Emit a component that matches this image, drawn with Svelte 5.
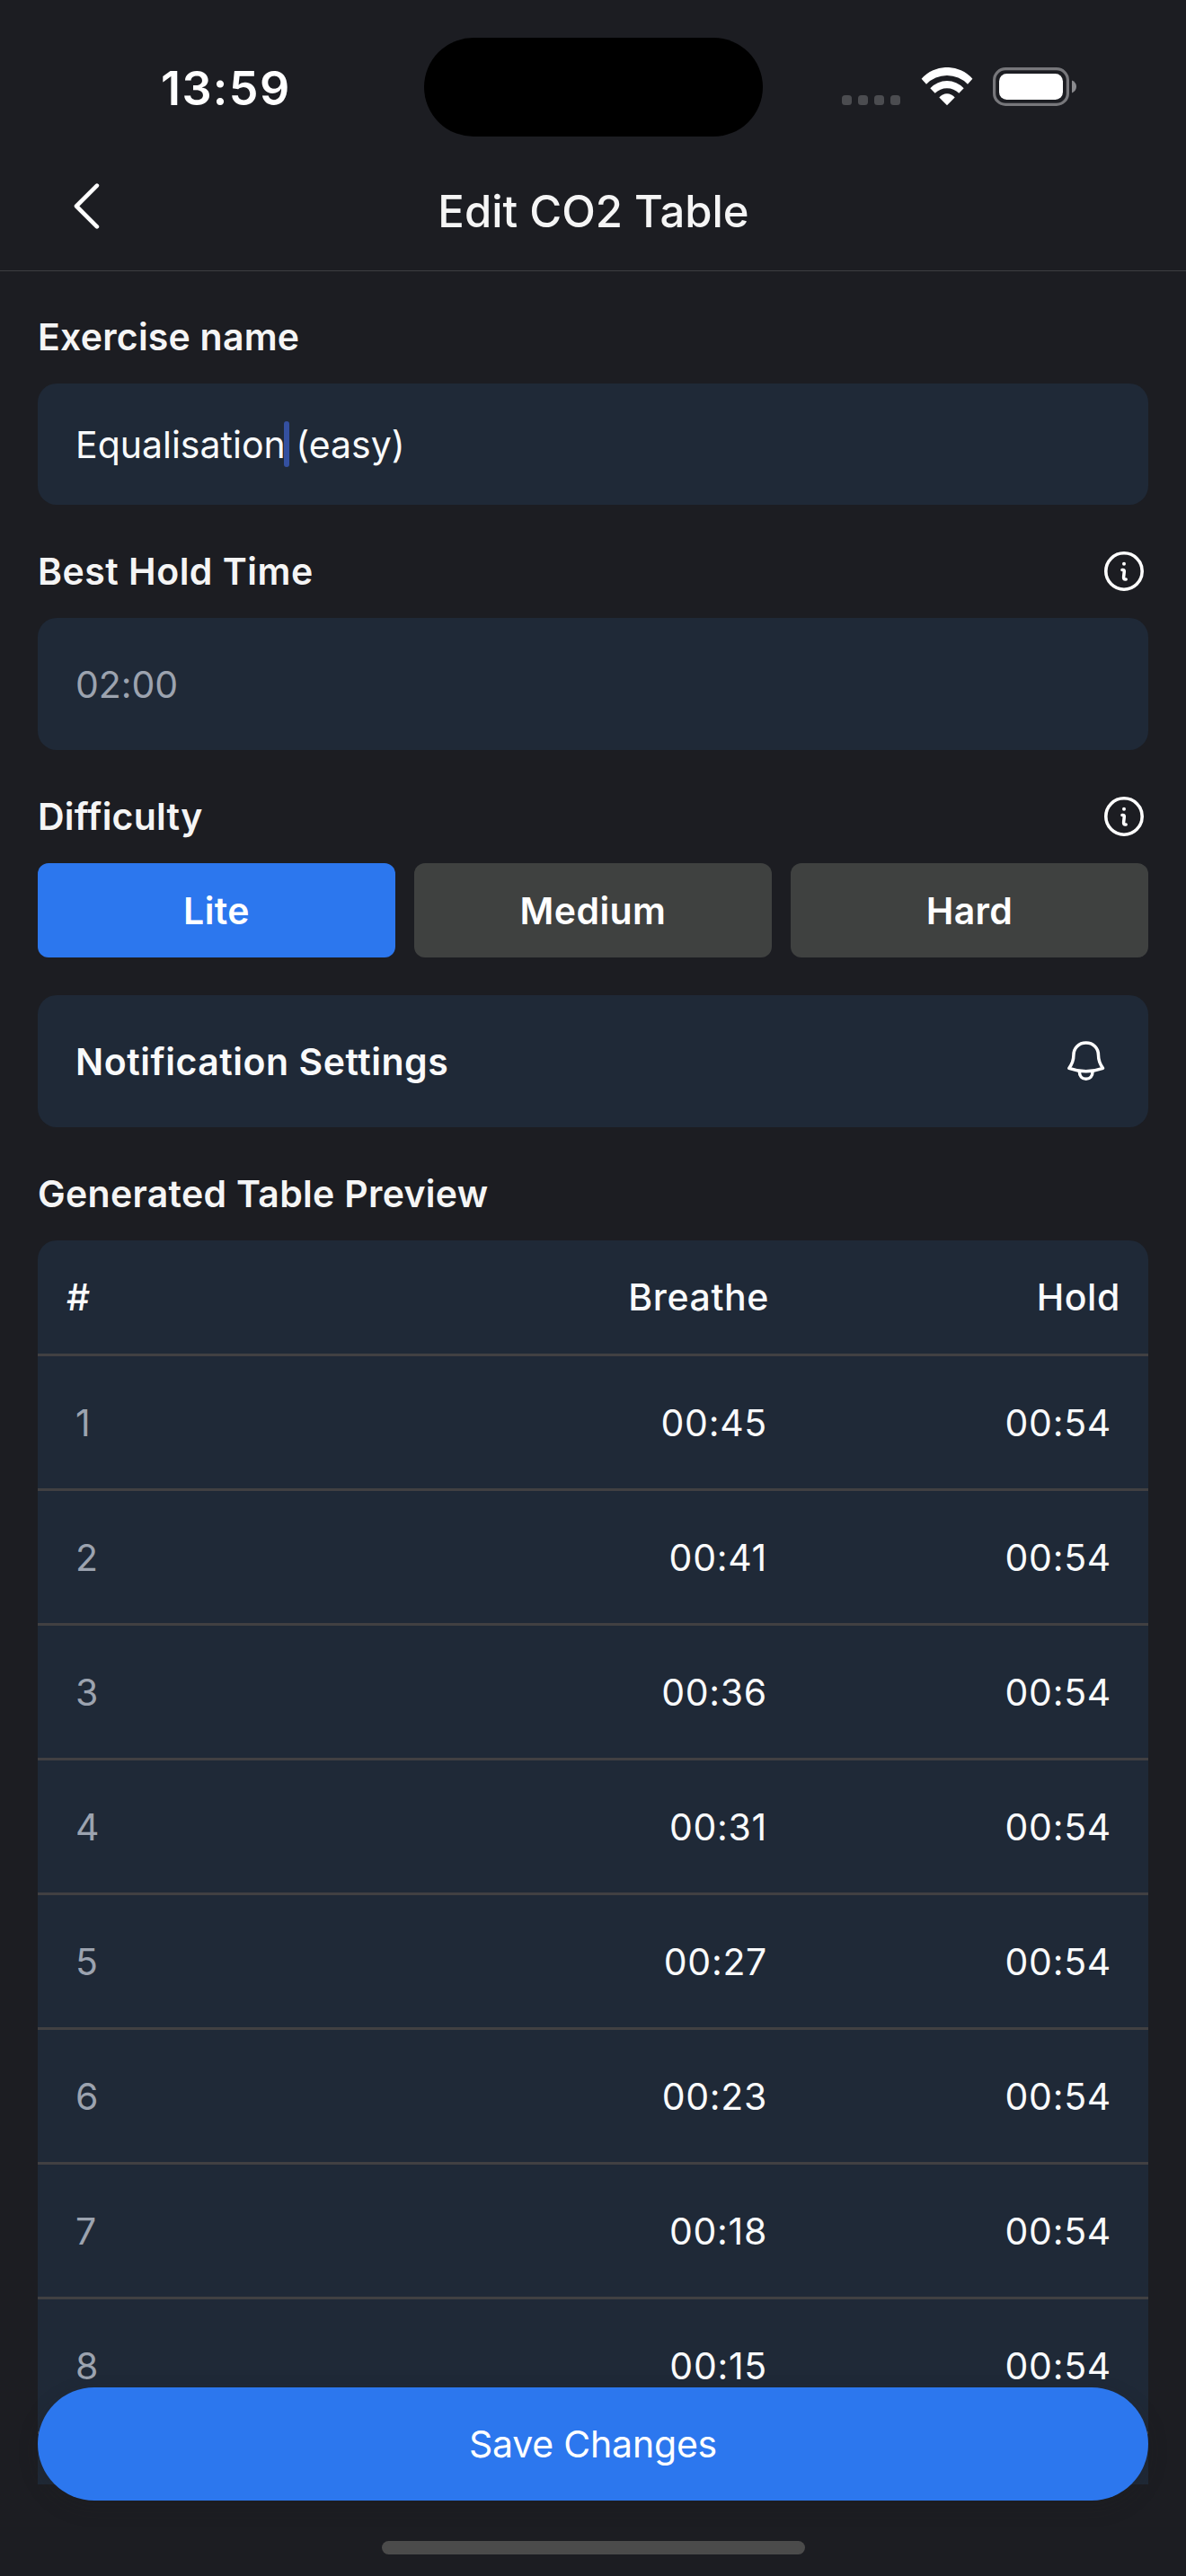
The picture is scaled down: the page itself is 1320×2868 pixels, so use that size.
<script>
  const levels = ['Lite', 'Medium', 'Hard'];
  let level = $state('Lite');

  const rounds = ['00:45', '00:41', '00:36', '00:31', '00:27', '00:23', '00:18', '00:15'].map(
    (breathe, i) => ({ n: i + 1, breathe, hold: '00:54' })
  );
</script>

{#snippet info()}
  <svg class="info" width="44" height="44" viewBox="0 0 44 44" fill="none" stroke="#fff">
    <circle cx="22" cy="22" r="20.2" stroke-width="3.6" />
    <circle cx="22" cy="13.7" r="2" fill="#fff" stroke="none" />
    <path d="M19.9 20.5h.8q1.8 0 1.6 1.8l-.7 6.2q-.2 2.5 1.8 2.5h.8" stroke-width="3.5" stroke-linecap="round" />
  </svg>
{/snippet}

<div class="screen">
  <div class="status">
    <span class="time">13:59</span>
    <div class="island"></div>
    <div class="indicators">
      <div class="dots"><i></i><i></i><i></i><i></i></div>
      <svg width="58" height="43" viewBox="0 0 58 43" fill="#fff">
        <path d="M.6 12.7A38 38 0 0 1 57.4 12.7L52 18.7A32.2 32.2 0 0 0 6 18.7Z" />
        <path d="M10.3 23.2A25.5 25.5 0 0 1 47.7 23.2L42.3 28.8A18.6 18.6 0 0 0 15.7 28.8Z" />
        <path d="M20.3 33.4A11.4 11.4 0 0 1 37.7 33.4L29 42.3Z" />
      </svg>
      <svg width="94" height="43" viewBox="0 0 94 43">
        <rect x="1.6" y="1.6" width="81.8" height="39.8" rx="12.5" fill="none" stroke="#77777b" stroke-width="3.2" />
        <rect x="7" y="7" width="71" height="29" rx="8.5" fill="#fff" />
        <path d="M88 14.6C91 15.8 93 18.2 93 21.5S91 27.2 88 28.4Z" fill="#8a8a8e" />
      </svg>
    </div>
  </div>

  <header>
    <button class="back" aria-label="Back">
      <svg width="29" height="51" viewBox="0 0 29 51" fill="none" stroke="#fff" stroke-width="4.6" stroke-linecap="round" stroke-linejoin="round">
        <path d="M25.9 2.6 3 25.5 25.9 48.4" />
      </svg>
    </button>
    <h1>Edit CO2 Table</h1>
  </header>

  <main>
    <section>
      <div class="label name">Exercise name</div>
      <div class="field text">
        <span>Equalisation<span class="caret"></span> (easy)</span>
      </div>
    </section>

    <section>
      <div class="label best"><span>Best Hold Time</span>{@render info()}</div>
      <div class="field tall placeholder">02:00</div>
    </section>

    <section>
      <div class="label name"><span>Difficulty</span>{@render info()}</div>
      <div class="levels">
        {#each levels as l}
          <button class:active={l === level} onclick={() => (level = l)}>{l}</button>
        {/each}
      </div>
    </section>

    <div class="field tall notify">
      <span>Notification Settings</span>
      <svg width="42" height="45" viewBox="0 0 42 45" fill="none" stroke="#fff" stroke-width="3.5" stroke-linejoin="round">
        <path d="M20.7 2C12.6 2 6.9 8 6.9 15.8C6.9 22 5 26 1.9 30.3Q20.7 37 39.5 30.3C36.4 26 34.5 22 34.5 15.8C34.5 8 28.8 2 20.7 2Z" />
        <path d="M13.4 34.2C13.4 39.2 16.3 42.3 20.7 42.3S28 39.2 28 34.2" />
      </svg>
    </div>

    <section class="grow">
      <div class="label preview">Generated Table Preview</div>
      <div class="table">
        <div class="row head"><span>#</span><span>Breathe</span><span>Hold</span></div>
        {#each rounds as r}
          <div class="row"><span class="n">{r.n}</span><span>{r.breathe}</span><span>{r.hold}</span></div>
        {/each}
      </div>
    </section>
  </main>

  <button class="save">Save Changes</button>
  <div class="home"></div>
</div>

<style>
  :global(body) {
    background: #1c1d22;
  }
  .screen {
    position: relative;
    box-sizing: border-box;
    width: 1320px;
    height: 2868px;
    overflow: hidden;
    display: flex;
    flex-direction: column;
    background: #1c1d22;
    color: #f5f5f5;
    font-family: Inter, 'Liberation Sans', sans-serif;
    font-size: 41px;
    line-height: 50px;
    white-space: nowrap;
  }
  button {
    margin: 0;
    padding: 0;
    border: 0;
    background: none;
    color: #fff;
    font: inherit;
    letter-spacing: inherit;
  }
  svg {
    display: block;
    flex: none;
  }
  .status {
    flex: none;
    display: grid;
    grid-template-columns: 472px 377px 1fr;
    align-items: center;
    height: 110px;
    padding-top: 42px;
  }
  .time {
    padding: 3px 0 0 179px;
    font-size: 52px;
    font-weight: 600;
    letter-spacing: 1.4px;
    color: #fff;
  }
  .island {
    height: 110px;
    border-radius: 55px;
    background: #000;
  }
  .indicators {
    display: flex;
    align-items: flex-end;
    gap: 22.5px;
    padding: 0 0 1px 88px;
  }
  .dots {
    display: flex;
    gap: 7px;
    padding-bottom: 1px;
  }
  .dots i {
    width: 11px;
    height: 11px;
    border-radius: 3.5px;
    background: #4b4c50;
  }
  header {
    flex: none;
    box-sizing: border-box;
    display: grid;
    grid-template-columns: 1fr auto 1fr;
    align-items: center;
    height: 150px;
    border-bottom: 1px solid #3d3e42;
  }
  .back {
    padding: 5px 0 0 82px;
  }
  h1 {
    margin: 0;
    padding: 18px 0 0 1px;
    font-size: 49px;
    font-weight: 500;
  }
  main {
    flex: none;
    box-sizing: border-box;
    display: flex;
    flex-direction: column;
    gap: 49px;
    height: 2464px;
    padding: 48px 42px 0;
    overflow: hidden;
  }
  .label {
    flex: none;
    display: flex;
    align-items: center;
    justify-content: space-between;
    height: 50px;
    margin-bottom: 27px;
    padding-right: 5px;
    font-weight: 600;
  }
  .name {
    letter-spacing: 0.22px;
  }
  .best {
    letter-spacing: 0.5px;
  }
  .preview {
    letter-spacing: 0.3px;
  }
  .field {
    box-sizing: border-box;
    display: flex;
    align-items: center;
    justify-content: space-between;
    height: 135px;
    padding: 0 48px 0 42px;
    border-radius: 21px;
    background: #1f2937;
    color: #f9fafb;
  }
  .tall {
    height: 147px;
  }
  .placeholder {
    color: #9ca3af;
    letter-spacing: -0.1px;
  }
  .caret {
    position: relative;
  }
  .caret::after {
    content: '';
    position: absolute;
    left: -2px;
    top: -1px;
    width: 6px;
    height: 51px;
    border-radius: 3px;
    background: #3450a0;
  }
  .levels {
    display: grid;
    grid-template-columns: repeat(3, 1fr);
    gap: 21px;
  }
  .levels button {
    height: 105px;
    border-radius: 12px;
    background: #3f4140;
    font-weight: 600;
    letter-spacing: 0.4px;
  }
  .levels .active {
    background: #2c77ee;
  }
  .notify {
    flex: none;
    margin-top: -7px;
    font-weight: 600;
    letter-spacing: 0.53px;
  }
  .grow {
    flex: 1;
    display: flex;
    flex-direction: column;
  }
  .table {
    flex: 1;
    border-radius: 21px 21px 0 0;
    background: #1f2937;
  }
  .row {
    display: grid;
    grid-template-columns: 1fr 300px 383px;
    align-items: center;
    height: 147px;
    padding: 0 41px 0 42px;
    border-bottom: 3px solid #414042;
    color: #f9fafb;
    letter-spacing: 0.7px;
    text-align: right;
  }
  .row span:first-child {
    text-align: left;
  }
  .row .n {
    color: #9ca3af;
  }
  .head {
    grid-template-columns: 1fr 300px 391px;
    height: 126px;
    padding: 0 31px 0 32px;
    font-weight: 500;
    letter-spacing: 0.6px;
  }
  .save {
    position: absolute;
    left: 42px;
    right: 42px;
    top: 2658px;
    height: 126px;
    border-radius: 63px;
    background: #2c77ee;
    box-shadow: 0 8px 22px rgba(30, 32, 30, 0.22);
    letter-spacing: -0.2px;
  }
  .home {
    position: absolute;
    left: 425px;
    top: 2829px;
    width: 471px;
    height: 15px;
    border-radius: 8px;
    background: #4b4b4b;
  }
</style>
